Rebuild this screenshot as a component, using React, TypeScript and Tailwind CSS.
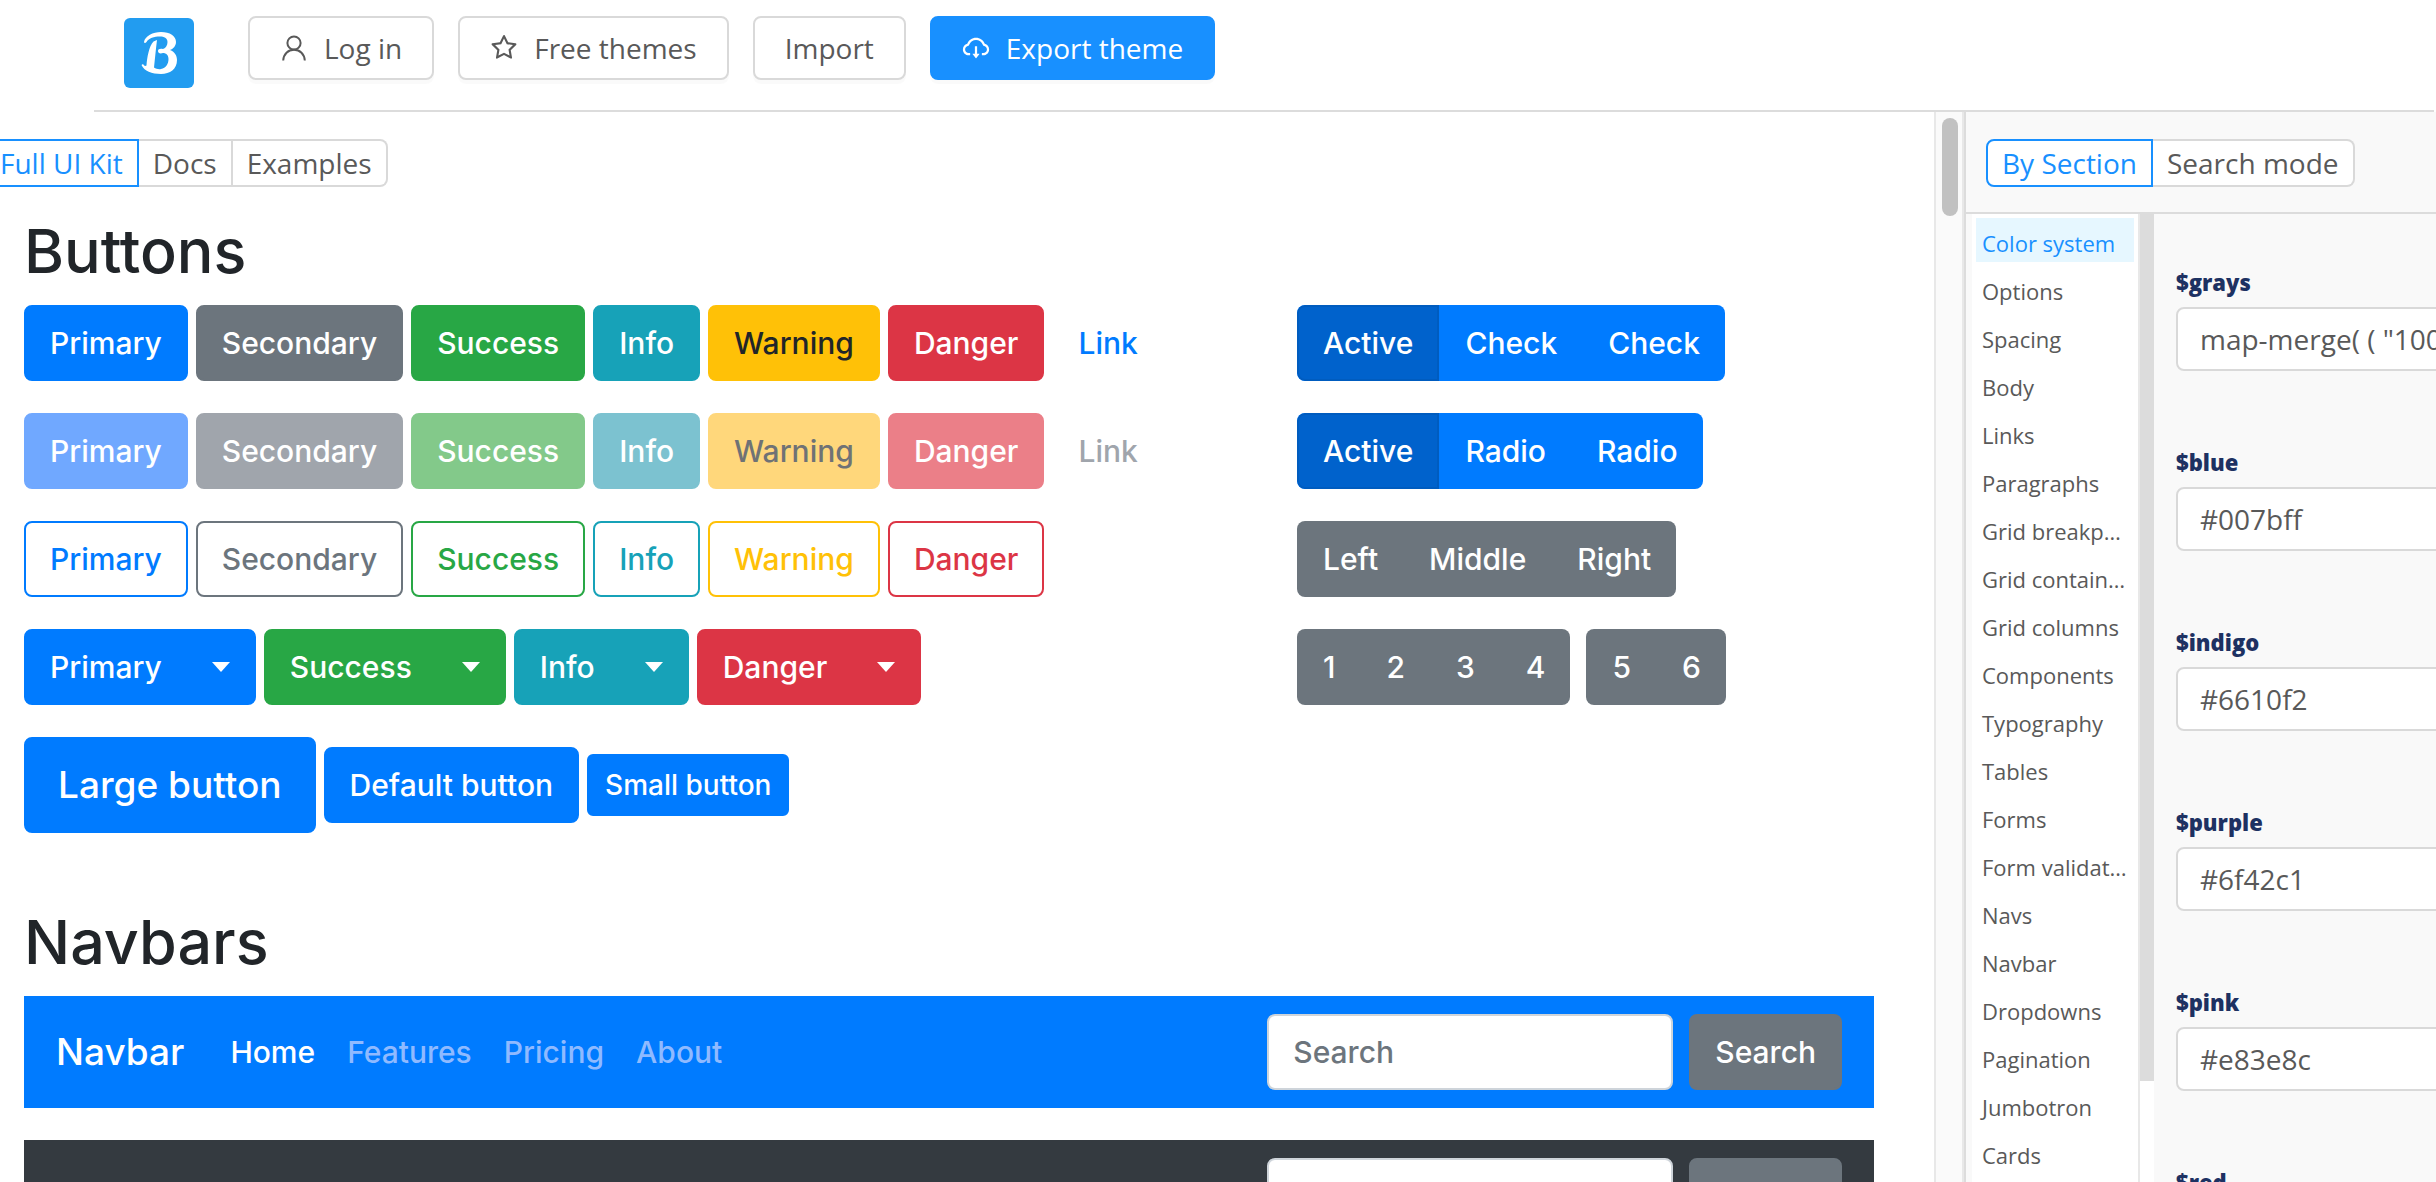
import React from "react";
import { AiOutlineStar, AiOutlineCloudDownload } from "react-icons/ai";

const variants = [
  {
    label: "Primary",
    solid: "bg-[#007bff] border-[#007bff] text-white",
    muted: "bg-[#70a8ff] border-[#70a8ff] text-white",
    outline: "border-[#007bff] text-[#007bff]",
  },
  {
    label: "Secondary",
    solid: "bg-[#6c757d] border-[#6c757d] text-white",
    muted: "bg-[#a0a5ac] border-[#a0a5ac] text-white",
    outline: "border-[#6c757d] text-[#6c757d]",
  },
  {
    label: "Success",
    solid: "bg-[#28a745] border-[#28a745] text-white",
    muted: "bg-[#83c98a] border-[#83c98a] text-white",
    outline: "border-[#28a745] text-[#28a745]",
  },
  {
    label: "Info",
    solid: "bg-[#17a2b8] border-[#17a2b8] text-white",
    muted: "bg-[#7cc2d0] border-[#7cc2d0] text-white",
    outline: "border-[#17a2b8] text-[#17a2b8]",
  },
  {
    label: "Warning",
    solid: "bg-[#ffc107] border-[#ffc107] text-[#212529]",
    muted: "bg-[#ffd77b] border-[#ffd77b] text-[#6f7275]",
    outline: "border-[#ffc107] text-[#ffc107]",
  },
  {
    label: "Danger",
    solid: "bg-[#dc3545] border-[#dc3545] text-white",
    muted: "bg-[#eb7f88] border-[#eb7f88] text-white",
    outline: "border-[#dc3545] text-[#dc3545]",
  },
];

const sections = [
  "Color system",
  "Options",
  "Spacing",
  "Body",
  "Links",
  "Paragraphs",
  "Grid breakpoints",
  "Grid containers",
  "Grid columns",
  "Components",
  "Typography",
  "Tables",
  "Forms",
  "Form validation",
  "Navs",
  "Navbar",
  "Dropdowns",
  "Pagination",
  "Jumbotron",
  "Cards",
];

const variables = [
  { name: "$grays", value: 'map-merge( ( "100": $gray-100, "200": $gray-200 ), $grays )' },
  { name: "$blue", value: "#007bff" },
  { name: "$indigo", value: "#6610f2" },
  { name: "$purple", value: "#6f42c1" },
  { name: "$pink", value: "#e83e8c" },
  { name: "$red", value: "#dc3545" },
];

const btn = "h-[76px] px-6 border-2 rounded-lg text-[30px] whitespace-nowrap";
const toolBtn = "h-16 flex items-center gap-4 border-2 rounded-lg px-[30px] text-[28px] shadow-[0_4px_0_rgba(0,0,0,0.02)]";
const toolIcon = "w-[30px] h-[30px] -mx-px";

const Logo = () => (
  <svg viewBox="0 0 70 70" className="w-[70px] h-[70px]" aria-label="Logo">
    <rect width="70" height="70" rx="6" fill="#229cf0" />
    <path
      fill="#fff"
      d="M20 24C21 18 29 14 37 14C46 14 52 18 52 24C52 28 49 31 46 32C51 34 53 38 53 42C53 51 46 56 37 56C28 56 20 53 17.5 47L19 46C20 48 21.5 48.5 22.5 47.5C23 40 25 28 29.5 23.5L33 22C32 30 31 40 30 49.5C32 51 35 51.5 37 51C42 50 44.5 46 44.5 41C44.5 37 42 35 39 35C36 36 34 35 34 33C34 31 36 30.5 39 31C42 30 43.5 27 43.5 24C43.5 20 40 18.5 36 18.5C30 18.5 25 20 22.5 24C21.5 25.5 19.5 25 20 24Z"
    />
  </svg>
);

const UserIcon = () => (
  <svg viewBox="0 0 30 30" className={toolIcon} fill="none" stroke="currentColor" strokeWidth="2">
    <circle cx="15" cy="10" r="6.6" />
    <path d="M4.2 27.5C4.6 21 9 16.8 15 16.8S25.4 21 25.8 27.5" />
  </svg>
);

interface GroupProps {
  items: string[];
  color: string;
  activeFirst?: boolean;
}

const ButtonGroup = ({ items, color, activeFirst }: GroupProps) => (
  <div className={`flex h-[76px] rounded-lg overflow-hidden text-[30px] text-white ${color}`}>
    {items.map((item, i) => (
      <button
        key={i}
        className={activeFirst && i === 0 ? "px-6 bg-[#0062cc] border-2 border-[#005cbf] rounded-l-lg" : "pl-[26px] pr-[25px]"}
      >
        {item}
      </button>
    ))}
  </div>
);

const Navbar = ({ color, linkColor, id }: { color: string; linkColor: string; id: string }) => (
  <nav className={`h-28 flex items-center justify-between px-8 mb-8 ${color}`}>
    <div className="flex items-center text-[30px]">
      <a href="#" className="text-[37px] text-white mr-[46px]">Navbar</a>
      <div className={`flex gap-8 ${linkColor}`}>
        <a href="#" className="text-white">Home</a>
        <a href="#">Features</a>
        <a href="#">Pricing</a>
        <a href="#">About</a>
      </div>
    </div>
    <form className="flex gap-4 text-[30px]">
      <label htmlFor={id} className="sr-only">Search</label>
      <input
        id={id}
        type="text"
        placeholder="Search"
        className="w-[406px] h-[76px] px-6 bg-white border-2 border-[#ced4da] rounded-lg placeholder:text-[#6c757d] placeholder:opacity-100"
      />
      <button type="button" className={`${btn} bg-[#6c757d] border-[#6c757d] text-white`}>Search</button>
    </form>
  </nav>
);

const Header = () => (
  <header className="ml-[94px] mr-[2px] h-28 border-b-2 border-[#dcdcdc] pl-[30px] flex items-start text-[#595959]">
    <a href="#" className="mt-[18px] mr-[54px]"><Logo /></a>
    <div className="flex gap-6 mt-4">
      <button className={`${toolBtn} border-[#d9d9d9] bg-white`}>
        <UserIcon />
        Log in
      </button>
      <button className={`${toolBtn} border-[#d9d9d9] bg-white`}>
        <AiOutlineStar className={toolIcon} />
        Free themes
      </button>
      <button className={`${toolBtn} border-[#d9d9d9] bg-white`}>Import</button>
      <button className={`${toolBtn} border-[#1890ff] bg-[#1890ff] text-white`}>
        <AiOutlineCloudDownload className={toolIcon} />
        Export theme
      </button>
    </div>
  </header>
);

const Preview = () => (
  <main className="flex-1 min-w-0 overflow-hidden">
    <div className="flex h-12 mt-[27px] -ml-4 text-[28px] text-[#595959]">
      <button className="px-[14px] border-2 border-[#1890ff] text-[#1890ff]">Full UI Kit</button>
      <button className="px-[14px] border-y-2 border-r-2 border-[#d9d9d9]">Docs</button>
      <button className="px-[14px] border-y-2 border-r-2 border-[#d9d9d9] rounded-r-lg">Examples</button>
    </div>

    <div className="pl-6 pr-[60px] text-[#212529] font-[Inter,sans-serif] font-medium">
      <h2 className="mt-[26px] mb-4 text-[61px] leading-[76px]">Buttons</h2>
      <div className="flex">
        <div className="w-[1273px] flex flex-col gap-8">
          <div className="flex gap-2">
            {variants.map((v) => (
              <button key={v.label} className={`${btn} ${v.solid}`}>{v.label}</button>
            ))}
            <button className={`${btn} border-transparent text-[#007bff]`}>Link</button>
          </div>
          <div className="flex gap-2">
            {variants.map((v) => (
              <button key={v.label} disabled className={`${btn} ${v.muted}`}>{v.label}</button>
            ))}
            <button disabled className={`${btn} border-transparent text-[#a0a5ac]`}>Link</button>
          </div>
          <div className="flex gap-2">
            {variants.map((v) => (
              <button key={v.label} className={`${btn} ${v.outline}`}>{v.label}</button>
            ))}
          </div>
          <div className="flex gap-2">
            {variants
              .filter((v) => v.label !== "Secondary" && v.label !== "Warning")
              .map((v) => (
                <div key={v.label} className="flex">
                  <button className={`${btn} ${v.solid} rounded-r-none`}>{v.label}</button>
                  <button className={`${btn} ${v.solid} rounded-l-none -ml-0.5`} aria-label={`${v.label} menu`}>
                    <svg viewBox="0 0 18 10" className="w-[18px] h-[10px]" fill="currentColor">
                      <path d="M0 0H18L9 10Z" />
                    </svg>
                  </button>
                </div>
              ))}
          </div>
          <div className="flex gap-2 items-center">
            <button className="h-24 px-8 border-2 border-[#007bff] bg-[#007bff] rounded-lg text-[37px] text-white">Large button</button>
            <button className={`${btn} bg-[#007bff] border-[#007bff] text-white`}>Default button</button>
            <button className="h-[62px] px-4 border-2 border-[#007bff] bg-[#007bff] rounded-md text-[28px] text-white">Small button</button>
          </div>
        </div>
        <div className="flex flex-col gap-8 items-start">
          <ButtonGroup items={["Active", "Check", "Check"]} color="bg-[#007bff]" activeFirst />
          <ButtonGroup items={["Active", "Radio", "Radio"]} color="bg-[#007bff]" activeFirst />
          <ButtonGroup items={["Left", "Middle", "Right"]} color="bg-[#6c757d]" />
          <div className="flex gap-4">
            <ButtonGroup items={["1", "2", "3", "4"]} color="bg-[#6c757d]" />
            <ButtonGroup items={["5", "6"]} color="bg-[#6c757d]" />
          </div>
        </div>
      </div>

      <h2 className="mt-[71px] mb-4 text-[61px] leading-[76px]">Navbars</h2>
      <Navbar color="bg-[#007bff]" linkColor="text-[#8fbaff]" id="search-primary" />
      <Navbar color="bg-[#343a40]" linkColor="text-white/50" id="search-dark" />
    </div>
  </main>
);

const Sidebar = () => (
  <aside className="w-[472px] shrink-0 flex flex-col border-l-2 border-[#dcdcdc] bg-[#f9f9f9] text-[#595959]">
    <div className="shrink-0 h-[102px] border-b-2 border-[#dcdcdc] pl-5 pt-[27px]">
      <div className="flex h-12 text-[28px]">
        <button className="px-[14px] border-2 border-[#1890ff] rounded-l-lg bg-white text-[#1890ff]">By Section</button>
        <button className="px-[14px] border-y-2 border-r-2 border-[#d9d9d9] rounded-r-lg bg-white">Search mode</button>
      </div>
    </div>
    <div className="flex-1 min-h-0 flex">
      <ul className="ml-[6px] w-[168px] shrink-0 bg-white border-r-2 border-[#e8e8e8] pt-1 px-1 overflow-hidden text-[22px]">
        {sections.map((name, i) => (
          <li key={name} className="mb-1">
            <a
              href="#"
              className={`block h-11 leading-[50px] px-[6px] truncate ${i === 0 ? "bg-[#e6f7ff] text-[#1890ff]" : ""}`}
            >
              {name}
            </a>
          </li>
        ))}
      </ul>
      <div className="w-[14px] shrink-0 bg-white">
        <div className="h-[867px] bg-[#dcdcdc]" />
      </div>
      <div className="flex-1 min-w-0 pl-[22px] pt-[52px] overflow-hidden">
        {variables.map((v) => (
          <div key={v.name} className="h-[180px]">
            <label htmlFor={v.name} className="block h-[41px] leading-8 text-[22px] font-extrabold text-[#1d3162]">{v.name}</label>
            <input
              id={v.name}
              type="text"
              defaultValue={v.value}
              className="w-[420px] h-16 px-[22px] border-2 border-[#d9d9d9] rounded-lg bg-white text-[28px]"
            />
          </div>
        ))}
      </div>
    </div>
  </aside>
);

export default function App() {
  return (
    <div className="h-screen overflow-hidden flex flex-col bg-white font-['Open_Sans',sans-serif]">
      <Header />
      <div className="flex-1 min-h-0 flex">
        <Preview />
        <div className="w-[30px] shrink-0 border-l-2 border-r-2 border-[#e8e8e8] bg-[#fafafa] pt-[6px] pl-[6px]">
          <div className="w-4 h-[98px] rounded-full bg-[#c1c1c1]" />
        </div>
        <Sidebar />
      </div>
    </div>
  );
}
